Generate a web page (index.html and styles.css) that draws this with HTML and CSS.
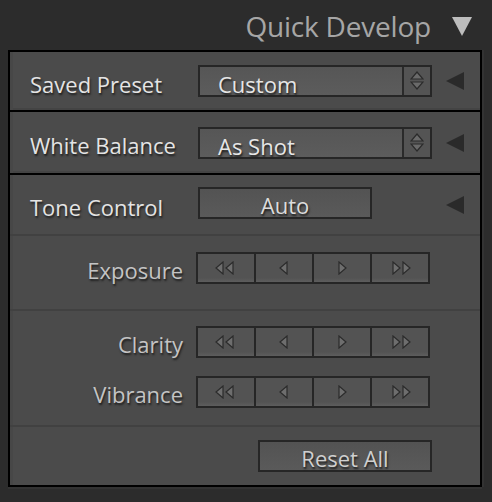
FILE: index.html
```html
<!DOCTYPE html>
<html>
<head>
<meta charset="utf-8">
<link rel="stylesheet" href="styles.css">
</head>
<body>
<div class="header">
  <span class="title">Quick Develop</span>
  <svg class="collapse" width="20" height="20" viewBox="0 0 20 20"><polygon points="0,1 20,1 10,20" fill="#bdbdbd"/></svg>
</div>
<div class="panel">
  <div class="section sec1">
    <div class="row">
      <span class="label">Saved Preset</span>
      <div class="dropdown"><span class="dd-text">Custom</span><span class="stepper"><svg width="14" height="20" viewBox="0 0 14 20"><polygon points="7,1 13,8 1,8" fill="#6a6a6a" stroke="#2b2b2b" stroke-width="1.2"/><polygon points="1,11 13,11 7,18" fill="#6a6a6a" stroke="#2b2b2b" stroke-width="1.2"/></svg></span></div>
      <svg class="disclose" width="18" height="18" viewBox="0 0 18 18"><polygon points="18,0 18,18 0,9" fill="#2a2a2a"/></svg>
    </div>
  </div>
  <div class="section sec2">
    <div class="row">
      <span class="label">White Balance</span>
      <div class="dropdown"><span class="dd-text">As Shot</span><span class="stepper"><svg width="14" height="20" viewBox="0 0 14 20"><polygon points="7,1 13,8 1,8" fill="#6a6a6a" stroke="#2b2b2b" stroke-width="1.2"/><polygon points="1,11 13,11 7,18" fill="#6a6a6a" stroke="#2b2b2b" stroke-width="1.2"/></svg></span></div>
      <svg class="disclose" width="18" height="18" viewBox="0 0 18 18"><polygon points="18,0 18,18 0,9" fill="#2a2a2a"/></svg>
    </div>
  </div>
  <div class="section sec3">
    <div class="row tone">
      <span class="label">Tone Control</span>
      <div class="btn auto">Auto</div>
      <svg class="disclose tone-arrow" width="18" height="18" viewBox="0 0 18 18"><polygon points="18,0 18,18 0,9" fill="#2a2a2a"/></svg>
    </div>
    <div class="group g-exposure">
      <div class="sub">
        <span class="sublabel">Exposure</span>
        <div class="seg">
          <span class="cell"><svg width="22" height="14" viewBox="0 0 22 14"><polygon points="8,1 8,13 1,7" fill="#6e6e6e" stroke="#2b2b2b" stroke-width="1.2"/><polygon points="18,1 18,13 11,7" fill="#6e6e6e" stroke="#2b2b2b" stroke-width="1.2"/></svg></span>
          <span class="cell"><svg width="10" height="14" viewBox="0 0 10 14"><polygon points="8,1 8,13 1,7" fill="#6e6e6e" stroke="#2b2b2b" stroke-width="1.2"/></svg></span>
          <span class="cell"><svg width="10" height="14" viewBox="0 0 10 14"><polygon points="2,1 2,13 9,7" fill="#6e6e6e" stroke="#2b2b2b" stroke-width="1.2"/></svg></span>
          <span class="cell"><svg width="22" height="14" viewBox="0 0 22 14"><polygon points="4,1 4,13 11,7" fill="#6e6e6e" stroke="#2b2b2b" stroke-width="1.2"/><polygon points="14,1 14,13 21,7" fill="#6e6e6e" stroke="#2b2b2b" stroke-width="1.2"/></svg></span>
        </div>
      </div>
    </div>
    <div class="group g-presence">
      <div class="sub">
        <span class="sublabel">Clarity</span>
        <div class="seg">
          <span class="cell"><svg width="22" height="14" viewBox="0 0 22 14"><polygon points="8,1 8,13 1,7" fill="#6e6e6e" stroke="#2b2b2b" stroke-width="1.2"/><polygon points="18,1 18,13 11,7" fill="#6e6e6e" stroke="#2b2b2b" stroke-width="1.2"/></svg></span>
          <span class="cell"><svg width="10" height="14" viewBox="0 0 10 14"><polygon points="8,1 8,13 1,7" fill="#6e6e6e" stroke="#2b2b2b" stroke-width="1.2"/></svg></span>
          <span class="cell"><svg width="10" height="14" viewBox="0 0 10 14"><polygon points="2,1 2,13 9,7" fill="#6e6e6e" stroke="#2b2b2b" stroke-width="1.2"/></svg></span>
          <span class="cell"><svg width="22" height="14" viewBox="0 0 22 14"><polygon points="4,1 4,13 11,7" fill="#6e6e6e" stroke="#2b2b2b" stroke-width="1.2"/><polygon points="14,1 14,13 21,7" fill="#6e6e6e" stroke="#2b2b2b" stroke-width="1.2"/></svg></span>
        </div>
      </div>
      <div class="sub">
        <span class="sublabel">Vibrance</span>
        <div class="seg">
          <span class="cell"><svg width="22" height="14" viewBox="0 0 22 14"><polygon points="8,1 8,13 1,7" fill="#6e6e6e" stroke="#2b2b2b" stroke-width="1.2"/><polygon points="18,1 18,13 11,7" fill="#6e6e6e" stroke="#2b2b2b" stroke-width="1.2"/></svg></span>
          <span class="cell"><svg width="10" height="14" viewBox="0 0 10 14"><polygon points="8,1 8,13 1,7" fill="#6e6e6e" stroke="#2b2b2b" stroke-width="1.2"/></svg></span>
          <span class="cell"><svg width="10" height="14" viewBox="0 0 10 14"><polygon points="2,1 2,13 9,7" fill="#6e6e6e" stroke="#2b2b2b" stroke-width="1.2"/></svg></span>
          <span class="cell"><svg width="22" height="14" viewBox="0 0 22 14"><polygon points="4,1 4,13 11,7" fill="#6e6e6e" stroke="#2b2b2b" stroke-width="1.2"/><polygon points="14,1 14,13 21,7" fill="#6e6e6e" stroke="#2b2b2b" stroke-width="1.2"/></svg></span>
        </div>
      </div>
    </div>
    <div class="group g-reset">
      <div class="btn reset">Reset All</div>
    </div>
  </div>
</div>
</body>
</html>
```

FILE: styles.css
```css
html, body {
  margin: 0;
  padding: 0;
  background: #2c2c2c;
  width: 492px;
  height: 502px;
  overflow: hidden;
  font-family: "Open Sans", "Liberation Sans", sans-serif;
}

.header {
  height: 50px;
  display: flex;
  align-items: center;
  justify-content: flex-end;
  padding-right: 20px;
  box-sizing: border-box;
}

.title {
  font-size: 28px;
  color: #a6a6a6;
  letter-spacing: -0.2px;
  margin-right: 21px;
  line-height: 1;
  margin-top: 1px;
}

.collapse {
  display: block;
  margin-top: 2px;
}

.panel {
  margin-left: 8px;
  width: 474px;
  border: 2px solid #000;
  box-sizing: border-box;
  background: #4b4b4b;
  box-shadow: 0 2px 0 #333, 2px 0 0 #333;
}

.section {
  box-shadow: inset 3px 0 0 #474747, inset 0 -2px 0 #444;
}

.sec1 {
  height: 60px;
  border-bottom: 2px solid #000;
  box-sizing: border-box;
}

.sec2 {
  height: 63px;
  border-bottom: 2px solid #000;
  box-sizing: border-box;
}

.sec3 {
  box-shadow: inset 3px 0 0 #474747;
}

.row {
  display: flex;
  align-items: center;
  padding-left: 20px;
  height: 58px;
}

.sec2 .row {
  height: 61px;
}

.label {
  flex: 0 0 168px;
  font-size: 22px;
  color: #e4e4e4;
  text-shadow: 1px 2px 2px #1e1e1e;
  line-height: 1;
  padding-top: 5px;
}

.dropdown {
  width: 234px;
  height: 32px;
  box-sizing: border-box;
  border: 2px solid #262626;
  background: linear-gradient(#565656, #5c5c5c);
  display: flex;
  align-items: stretch;
}

.dd-text {
  flex: 1;
  font-size: 22px;
  color: #e6e6e6;
  text-shadow: 1px 2px 2px #1e1e1e;
  line-height: 28px;
  padding-top: 3px;
  padding-left: 18px;
  height: 28px;
  box-sizing: border-box;
}

.stepper {
  width: 26px;
  border-left: 2px solid #2a2a2a;
  background: #545454;
  display: flex;
  align-items: center;
  justify-content: center;
}

.stepper svg {
  display: block;
}

.disclose {
  display: block;
  margin-left: 14px;
}

.tone {
  height: 59px;
  border-bottom: 2px solid #414141;
}

.tone .tone-arrow {
  margin-left: 74px;
}

.btn {
  height: 32px;
  box-sizing: border-box;
  border: 2px solid #262626;
  background: linear-gradient(#535353, #5a5a5a);
  text-align: center;
  font-size: 22px;
  line-height: 26px;
  padding-top: 3px;
  color: #dcdcdc;
  text-shadow: 1px 2px 2px #1e1e1e;
}

.auto {
  width: 174px;
  margin-top: -3px;
}

.group {
  border-bottom: 2px solid #414141;
  display: flex;
  flex-direction: column;
  gap: 18px;
  padding-top: 16px;
  box-sizing: border-box;
}

.g-exposure {
  height: 75px;
}

.g-presence {
  height: 116px;
  padding-top: 15px;
}

.g-reset {
  border-bottom: none;
  height: 58px;
  padding-top: 13px;
  align-items: flex-end;
  padding-right: 48px;
}

.reset {
  width: 174px;
  color: #cfcfcf;
}

.sub {
  display: flex;
  align-items: center;
  height: 32px;
}

.sublabel {
  width: 173px;
  text-align: right;
  font-size: 22px;
  color: #c4c4c4;
  text-shadow: 1px 2px 2px #1e1e1e;
  line-height: 1;
  padding-top: 4px;
  margin-right: 13px;
}

.seg {
  width: 234px;
  height: 32px;
  box-sizing: border-box;
  border: 2px solid #262626;
  background: #262626;
  display: flex;
  gap: 2px;
}

.cell {
  flex: 1;
  background: linear-gradient(#535353 85%, #5d5d5d);
  display: flex;
  align-items: center;
  justify-content: center;
}

.cell svg {
  display: block;
}
```
